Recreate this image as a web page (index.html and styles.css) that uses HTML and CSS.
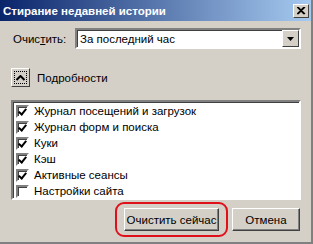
FILE: index.html
```
<!DOCTYPE html>
<html lang="ru">
<head>
    <meta charset="UTF-8">
    <title>Стирание недавней истории</title>
    <link rel="stylesheet" href="styles.css">
</head>
<body>
    <div class="window">
        <div class="titlebar">
            <span class="title">Стирание недавней истории</span>
            <span class="close-btn">
                <svg width="9" height="8" viewBox="0 0 9 8">
                    <path d="M1 0 L8 7 M0 0 L7 7 M7 0 L0 7 M8 0 L1 7" stroke="#000" stroke-width="1.2"/>
                </svg>
            </span>
        </div>

        <div class="content">
            <div class="range-row">
                <label>Очис<u>т</u>ить:</label>
                <div class="select">
                    <span class="select-value">За последний час</span>
                    <span class="select-arrow">
                        <svg width="7" height="4" viewBox="0 0 7 4"><path d="M0 0 H7 L3.5 4 Z" fill="#000"/></svg>
                    </span>
                </div>
            </div>

            <div class="details-row">
                <span class="toggle">
                    <svg width="9" height="6" viewBox="0 0 9 6"><path d="M0.5 5 L4.5 1 L8.5 5" stroke="#000" stroke-width="2" fill="none"/></svg>
                </span>
                <span>По<u>д</u>робности</span>
            </div>

            <div class="list">
                <div class="item"><span class="check on"></span>Журнал посещений и загрузок</div>
                <div class="item"><span class="check on"></span>Журнал форм и поиска</div>
                <div class="item"><span class="check on"></span>Куки</div>
                <div class="item"><span class="check on"></span>Кэш</div>
                <div class="item"><span class="check on"></span>Активные сеансы</div>
                <div class="item"><span class="check"></span>Настройки сайта</div>
            </div>

            <div class="buttons">
                <span class="highlight">
                    <button class="btn btn-wide">Очистить сейчас</button>
                </span>
                <button class="btn">Отмена</button>
            </div>
        </div>
    </div>
</body>
</html>
```

FILE: styles.css
```
body {
    margin: 0;
    font-family: "Liberation Sans", Arial, sans-serif;
    font-size: 11.5px;
    color: #000;
}

.window {
    width: 313px;
    height: 244px;
    box-sizing: border-box;
    background-color: #d4d0c8;
    border-right: 2px solid #808080;
    border-bottom: 2px solid #808080;
    display: flex;
    flex-direction: column;
}

.titlebar {
    height: 21px;
    flex: none;
    display: flex;
    align-items: center;
    justify-content: space-between;
    padding: 0 2px 0 3px;
    background: linear-gradient(to right, #0a246a, #a6caf0);
}

.title {
    color: #fff;
    font-weight: bold;
    font-size: 11.5px;
}

.close-btn {
    width: 16px;
    height: 14px;
    box-sizing: border-box;
    background-color: #d4d0c8;
    border: 1px solid;
    border-color: #fff #404040 #404040 #fff;
    display: flex;
    align-items: center;
    justify-content: center;
}

.content {
    padding: 7px 10px 0 11px;
}

/* Clear range row */
.range-row {
    display: flex;
    align-items: center;
}

.range-row label {
    width: 62px;
    padding-left: 2px;
}

.select {
    flex: 1;
    height: 21px;
    box-sizing: border-box;
    background-color: #fff;
    border: 2px solid;
    border-color: #808080 #fff #fff #808080;
    box-shadow: inset 1px 1px 0 #404040;
    display: flex;
    align-items: center;
    justify-content: space-between;
}

.select-value {
    padding-left: 3px;
}

.select-arrow {
    width: 17px;
    height: 17px;
    box-sizing: border-box;
    background-color: #d4d0c8;
    border: 1px solid;
    border-color: #fff #404040 #404040 #fff;
    display: flex;
    align-items: center;
    justify-content: center;
}

/* Details toggle */
.details-row {
    display: flex;
    align-items: center;
    gap: 7px;
    margin-top: 19px;
}

.toggle {
    width: 19px;
    height: 19px;
    box-sizing: border-box;
    border: 1px solid;
    border-color: #fff #404040 #404040 #fff;
    outline: 1px dotted #000;
    outline-offset: -4px;
    display: flex;
    align-items: center;
    justify-content: center;
}

/* Checkbox list */
.list {
    margin-top: 13px;
    height: 100px;
    box-sizing: border-box;
    background-color: #fff;
    border: 2px solid;
    border-color: #808080 #fff #fff #808080;
    box-shadow: inset 1px 1px 0 #404040;
    padding: 1px 2px;
}

.item {
    display: flex;
    align-items: center;
    height: 16px;
}

.check {
    width: 13px;
    height: 13px;
    box-sizing: border-box;
    margin: 0 5px 0 1px;
    border: 2px solid;
    border-color: #808080 #fff #fff #808080;
    box-shadow: inset 1px 1px 0 #404040;
    background-color: #fff;
    position: relative;
}

.check.on::after {
    content: "";
    position: absolute;
    left: 2px;
    top: 0px;
    width: 3px;
    height: 6px;
    border: solid #000;
    border-width: 0 2px 2px 0;
    transform: rotate(40deg);
}

/* Bottom buttons */
.buttons {
    display: flex;
    justify-content: flex-end;
    align-items: center;
    gap: 4px;
    margin-top: 2px;
    padding-right: 1px;
}

.highlight {
    padding: 4px 7px;
    border: 2px solid #e0101a;
    border-radius: 9px;
}

.btn {
    display: block;
    height: 23px;
    font-family: "Liberation Sans", Arial, sans-serif;
    font-size: 11.5px;
    white-space: nowrap;
    background-color: #d4d0c8;
    border: 1px solid;
    border-color: #fff #404040 #404040 #fff;
    box-shadow: inset -1px -1px 0 #808080;
    padding: 0;
    width: 68px;
}

.btn-wide {
    width: 95px;
}
```
